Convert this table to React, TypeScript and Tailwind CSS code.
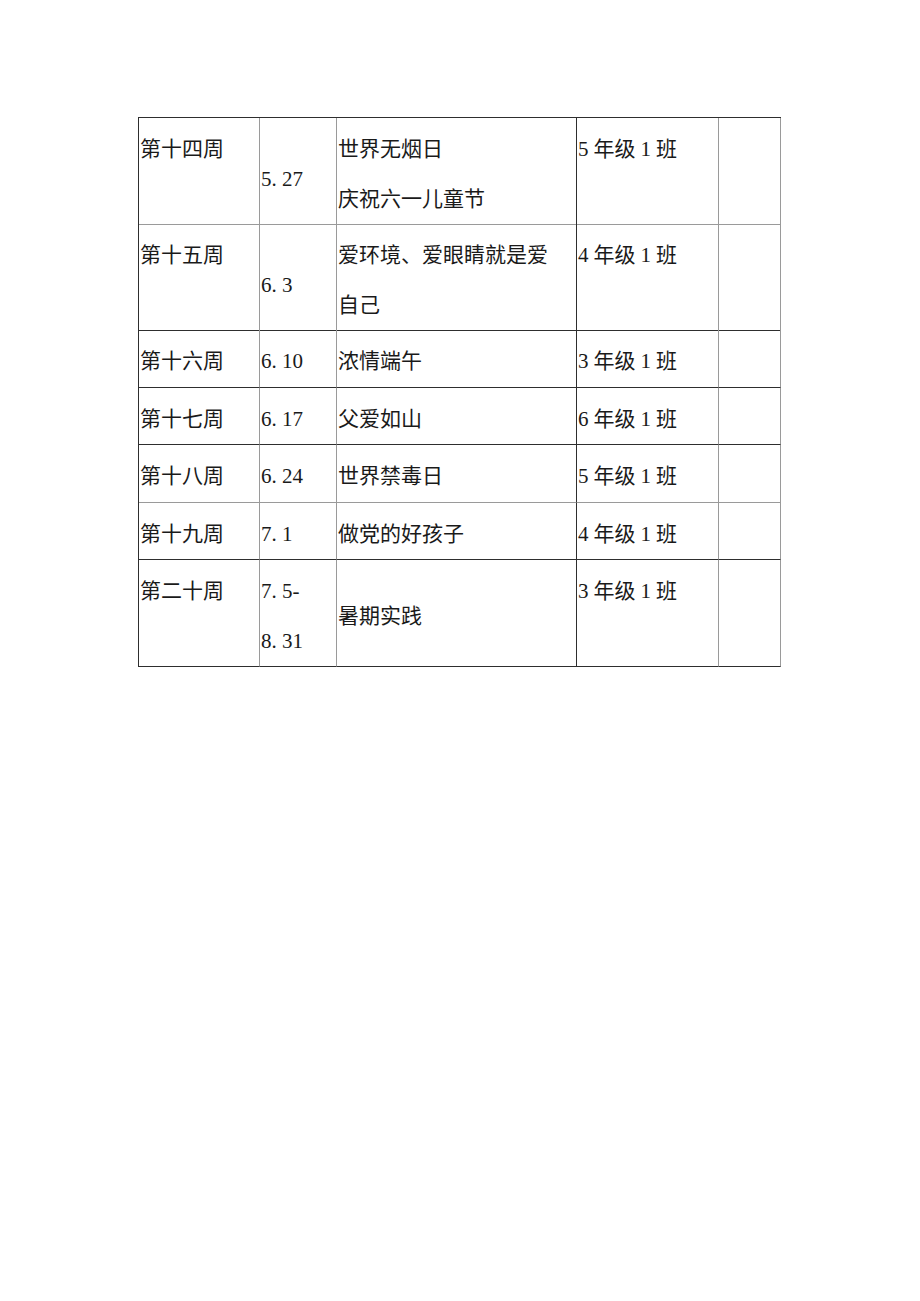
const dark = "border-[#2e2e2e]";
const gray = "border-[#9a9a9a]";

type Row = {
  week: string;
  date: string[];
  datePad: string;
  topic: string[];
  topicPad: string;
  grade: string;
  h: string;
  bottom: string;
};

const rows: Row[] = [
  { week: "第十四周", date: ["5.27"], datePad: "pt-[36px]", topic: ["世界无烟日", "庆祝六一儿童节"], topicPad: "pt-[6px]", grade: "5", h: "h-[106px]", bottom: gray },
  { week: "第十五周", date: ["6.3"], datePad: "pt-[36px]", topic: ["爱环境、爱眼睛就是爱", "自己"], topicPad: "pt-[6px]", grade: "4", h: "h-[106px]", bottom: dark },
  { week: "第十六周", date: ["6.10"], datePad: "pt-[6px]", topic: ["浓情端午"], topicPad: "pt-[6px]", grade: "3", h: "h-[58px]", bottom: dark },
  { week: "第十七周", date: ["6.17"], datePad: "pt-[6px]", topic: ["父爱如山"], topicPad: "pt-[6px]", grade: "6", h: "h-[57px]", bottom: dark },
  { week: "第十八周", date: ["6.24"], datePad: "pt-[6px]", topic: ["世界禁毒日"], topicPad: "pt-[6px]", grade: "5", h: "h-[58px]", bottom: gray },
  { week: "第十九周", date: ["7.1"], datePad: "pt-[6px]", topic: ["做党的好孩子"], topicPad: "pt-[6px]", grade: "4", h: "h-[57px]", bottom: dark },
  { week: "第二十周", date: ["7.5-", "8.31"], datePad: "pt-[6px]", topic: ["暑期实践"], topicPad: "pt-[31px]", grade: "3", h: "h-[107px]", bottom: dark },
];

// half-width period, like the song-style font in the original document
function DateText({ text }: { text: string }) {
  return (
    <>
      {text.split("").map((ch, i) =>
        ch === "." ? (
          <span key={i} className="inline-block w-[10.5px]">
            .
          </span>
        ) : (
          <span key={i}>{ch}</span>
        )
      )}
    </>
  );
}

export default function App() {
  return (
    <div
      className="min-h-[1301px] w-[920px] bg-white pl-[138px] pt-[117px] text-[21px] leading-[50px] text-[#1a1a1a]"
      style={{ fontFamily: '"Liberation Serif", "Noto Sans CJK SC", serif' }}
    >
      <div className="w-[643px] border-l border-t border-l-[#2e2e2e] border-t-[#2e2e2e]">
        {rows.map((r) => (
          <div key={r.week} className={`grid grid-cols-[121px_77px_240px_142px_62px] ${r.h}`}>
            <div className={`border-b border-r ${r.bottom} border-r-[#9a9a9a] pl-[1px] pt-[6px]`}>
              {r.week}
            </div>
            <div className={`border-b border-r ${r.bottom} border-r-[#9a9a9a] pl-[1px] ${r.datePad}`}>
              {r.date.map((d) => (
                <div key={d}>
                  <DateText text={d} />
                </div>
              ))}
            </div>
            <div className={`border-b border-r ${r.bottom} border-r-[#2e2e2e] pl-[1px] ${r.topicPad}`}>
              {r.topic.map((t) => (
                <div key={t}>{t}</div>
              ))}
            </div>
            <div className={`border-b border-r ${r.bottom} border-r-[#9a9a9a] pl-[1px] pt-[6px]`}>
              <span className="mr-[5px]">{r.grade}</span>年级<span className="mx-[5px]">1</span>班
            </div>
            <div className={`border-b border-r ${r.bottom} border-r-[#9a9a9a]`} />
          </div>
        ))}
      </div>
    </div>
  );
}
